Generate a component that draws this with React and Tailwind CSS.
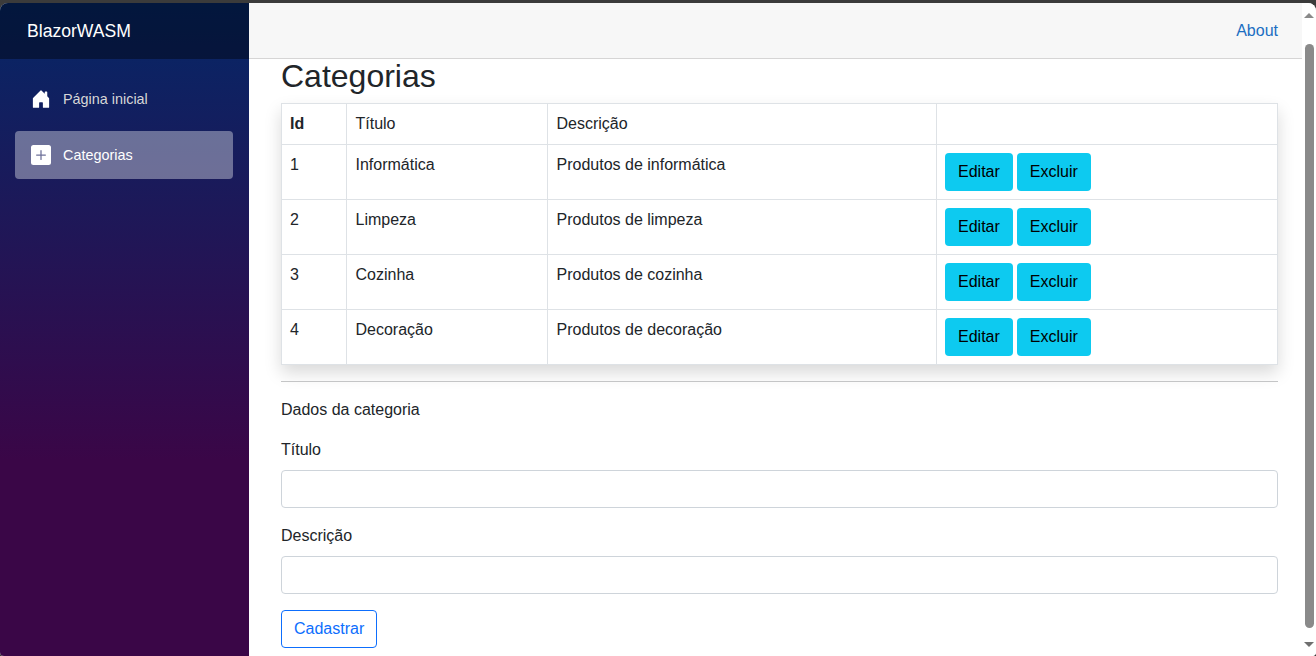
import React from 'react';

const rows = [
  { id: 1, titulo: 'Informática', descricao: 'Produtos de informática' },
  { id: 2, titulo: 'Limpeza', descricao: 'Produtos de limpeza' },
  { id: 3, titulo: 'Cozinha', descricao: 'Produtos de cozinha' },
  { id: 4, titulo: 'Decoração', descricao: 'Produtos de decoração' },
];

const HomeIcon = () => (
  <svg width="20" height="20" viewBox="0 0 16 16" fill="#fff" className="shrink-0">
    <path d="M6.5 14.5v-3.505c0-.245.25-.495.5-.495h2c.25 0 .5.25.5.5v3.5a.5.5 0 0 0 .5.5h4a.5.5 0 0 0 .5-.5v-7a.5.5 0 0 0-.146-.354L13 5.793V2.5a.5.5 0 0 0-.5-.5h-1a.5.5 0 0 0-.5.5v1.293L8.354 1.146a.5.5 0 0 0-.708 0l-6 6A.5.5 0 0 0 1.5 7.5v7a.5.5 0 0 0 .5.5h4a.5.5 0 0 0 .5-.5z" />
  </svg>
);

const PlusIcon = () => (
  <svg width="20" height="20" viewBox="0 0 16 16" fill="#fff" className="shrink-0">
    <path d="M2 0a2 2 0 0 0-2 2v12a2 2 0 0 0 2 2h12a2 2 0 0 0 2-2V2a2 2 0 0 0-2-2H2zm6.5 4.5v3h3a.5.5 0 0 1 0 1h-3v3a.5.5 0 0 1-1 0v-3h-3a.5.5 0 0 1 0-1h3v-3a.5.5 0 0 1 1 0z" />
  </svg>
);

const Sidebar = () => (
  <aside className="w-[249px] shrink-0 h-full bg-[linear-gradient(180deg,#052767_0%,#3a0647_70%)]">
    <div className="h-[56px] bg-black/40 flex items-center pl-[27px] text-[17.6px] text-white">BlazorWASM</div>
    <nav className="pl-[15px] pr-[16px] pt-[16px]">
      <a className="h-[48px] flex items-center gap-[12px] pl-[16px] rounded text-[14.4px] text-[#d7d7d7]">
        <HomeIcon /> <span className="pt-[2px]">Página inicial</span>
      </a>
      <a className="h-[48px] mt-[8px] flex items-center gap-[12px] pl-[16px] rounded text-[14.4px] text-white bg-white/[0.37]">
        <PlusIcon /> <span className="pt-[2px]">Categorias</span>
      </a>
    </nav>
  </aside>
);

const Field = ({ label }) => (
  <div className="mb-[16px]">
    <label className="block mb-[8px] leading-[24px]">{label}</label>
    <input className="block w-full h-[38px] bg-white border border-[#ced4da] rounded" />
  </div>
);

const Scrollbar = () => (
  <div className="w-[14px] shrink-0 h-full bg-white flex flex-col items-center pt-[10px] pb-[9px]">
    <div className="w-0 h-0 border-x-[5px] border-x-transparent border-b-[5px] border-b-[#8a8a8a]" />
    <div className="w-[9px] flex-1 mt-[26px] mb-[14px] rounded-full bg-[#8a8a8a]" />
    <div className="w-0 h-0 border-x-[5px] border-x-transparent border-t-[5px] border-t-[#6f6f6f]" />
  </div>
);

export default function App() {
  return (
    <div className="h-[656px] w-[1316px] overflow-hidden bg-[#3b3b3b] pt-[3px] font-['Liberation_Sans',Arial,sans-serif] text-[16px] text-[#212529]">
      <div className="h-[653px] flex overflow-hidden bg-white rounded-t-[8px] rounded-b-[4px]">
        <Sidebar />
        <main className="flex-1 min-w-0 h-full overflow-hidden">
          <header className="h-[56px] bg-[#f7f7f7] border-b border-[#d6d5d5] flex items-center justify-end pr-[24px]">
            <a className="text-[#1b6ec2]">About</a>
          </header>
          <div className="pl-[32px] pr-[24px]">
            <h1 className="-mt-[2px] text-[32px] leading-[38.4px] font-normal mb-[8px]">Categorias</h1>
            <table className="w-[997px] table-fixed border-collapse shadow-[0_8px_16px_rgba(0,0,0,0.15)]">
              <colgroup>
                <col className="w-[65px]" />
                <col className="w-[201px]" />
                <col className="w-[389px]" />
                <col />
              </colgroup>
              <thead>
                <tr>
                  <th className="border border-[#dee2e6] p-[8px] text-left font-bold leading-[24px]">Id</th>
                  <td className="border border-[#dee2e6] p-[8px] pl-[8.5px] leading-[24px]">Título</td>
                  <td className="border border-[#dee2e6] p-[8px] pl-[8.5px] leading-[24px]">Descrição</td>
                  <td className="border border-[#dee2e6] p-[8px] leading-[24px]"></td>
                </tr>
              </thead>
              <tbody>
                {rows.map((r) => (
                  <tr key={r.id}>
                    <td className="border border-[#dee2e6] p-[8px] align-top leading-[24px]">{r.id}</td>
                    <td className="border border-[#dee2e6] p-[8px] pl-[8.5px] align-top leading-[24px]">{r.titulo}</td>
                    <td className="border border-[#dee2e6] p-[8px] pl-[8.5px] align-top leading-[24px]">{r.descricao}</td>
                    <td className="border border-[#dee2e6] p-[8px] align-top">
                      <div className="flex gap-[4px]">
                        <button className="h-[38px] px-[13px] rounded bg-[#0dcaf0] text-black">Editar</button>
                        <button className="h-[38px] px-[13px] rounded bg-[#0dcaf0] text-black">Excluir</button>
                      </div>
                    </td>
                  </tr>
                ))}
              </tbody>
            </table>
            <hr className="mt-[16px] mb-[16px] border-t border-[#c4c5c6]" />
            <p className="leading-[24px] mb-[16px]">Dados da categoria</p>
            <Field label="Título" />
            <Field label="Descrição" />
            <button className="h-[38px] px-[12px] rounded bg-white border border-[#0d6efd] text-[#0d6efd]">Cadastrar</button>
          </div>
        </main>
        <Scrollbar />
      </div>
    </div>
  );
}
